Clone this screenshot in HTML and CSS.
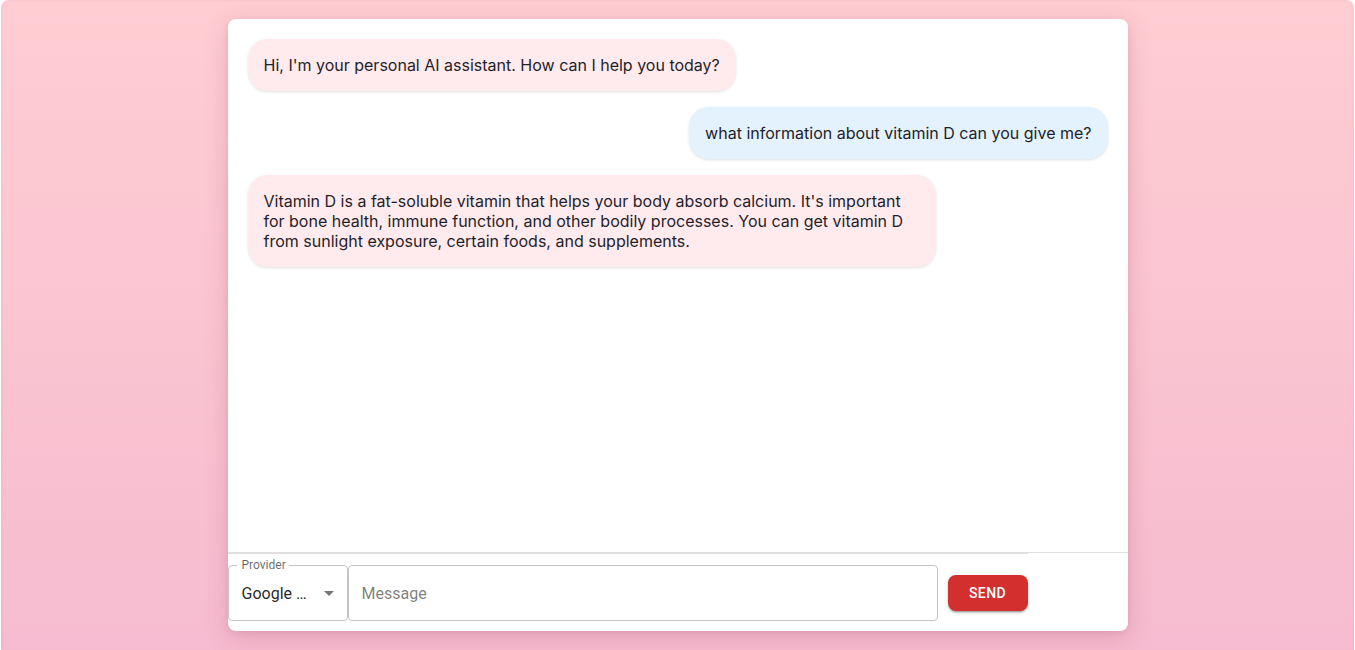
FILE: index.html
```html
<!DOCTYPE html>
<html lang="en">
<head>
<meta charset="utf-8">
<title>AI Assistant</title>
<link rel="stylesheet" href="styles.css">
</head>
<body>
<div class="page">
  <div class="card">
    <div class="messages">
      <div class="bubble ai">Hi, I'm your personal AI assistant. How can I help you today?</div>
      <div class="bubble user">what information about vitamin D can you give me?</div>
      <div class="bubble ai">Vitamin D is a fat-soluble vitamin that helps your body absorb calcium. It's important for bone health, immune function, and other bodily processes. You can get vitamin D from sunlight exposure, certain foods, and supplements.</div>
    </div>
    <div class="footer">
      <div class="row">
        <div class="select">
          <fieldset class="outline"><legend>Provider</legend></fieldset>
          <span class="label">Provider</span>
          <span class="value">Google Gemini</span>
          <svg class="arrow" viewBox="0 0 24 24" width="24" height="24"><path d="M7 10l5 5 5-5z" fill="rgba(0,0,0,0.54)"/></svg>
        </div>
        <div class="field">
          <span class="placeholder">Message</span>
        </div>
        <button class="send">SEND</button>
      </div>
    </div>
  </div>
</div>
</body>
</html>
```

FILE: styles.css
```css
* { box-sizing: border-box; }
html, body { margin: 0; padding: 0; }
body { font-family: Inter, "Noto Sans", sans-serif; overflow: hidden; }

.page {
  margin: 0 1px;
  height: 660px;
  border-radius: 8px;
  background: linear-gradient(#ffcdd2, #f6bbd0);
  box-shadow: inset 0 0 4px rgba(0,0,0,0.06);
  padding-top: 19px;
  display: flex;
  justify-content: center;
  align-items: flex-start;
}

.card {
  width: 900px;
  height: 612px;
  background: #fff;
  border-radius: 8px;
  box-shadow: 0 6px 24px rgba(160, 60, 90, 0.22), 0 2px 6px rgba(0,0,0,0.06);
  display: flex;
  flex-direction: column;
  overflow: hidden;
}

.messages {
  flex: 1;
  padding: 20px;
  display: flex;
  flex-direction: column;
  gap: 16px;
}

.bubble {
  max-width: 80%;
  padding: 16px;
  border-radius: 20px;
  font-size: 16px;
  line-height: 20px;
  color: #1f2329;
  box-shadow: 0 1px 3px rgba(0,0,0,0.12);
}
.bubble.ai { align-self: flex-start; background: #ffebee; }
.bubble.user { align-self: flex-end; background: #e3f2fd; }

.footer {
  border-top: 1px solid #e0e0e0;
  padding-bottom: 10px;
}
.row {
  width: 800px;
  border-top: 1px solid #e0e0e0;
  padding-top: 11px;
  display: flex;
  align-items: center;
  font-family: Roboto, sans-serif;
}

.select {
  position: relative;
  width: 120px;
  height: 56px;
  flex: none;
  display: flex;
  align-items: center;
  padding: 0 32px 0 14px;
}
.outline {
  position: absolute;
  inset: -5px 0 0 0;
  margin: 0;
  padding: 0 8px;
  border: 1px solid #c4c4c4;
  border-radius: 4px;
  pointer-events: none;
}
.outline legend {
  font-size: 12px;
  padding: 0 4px;
  visibility: hidden;
  height: 11px;
  line-height: 11px;
}
.label {
  position: absolute;
  left: 14px;
  top: -7px;
  font-size: 12px;
  line-height: 14px;
  color: rgba(0,0,0,0.6);
}
.value {
  font-size: 16px;
  color: rgba(0,0,0,0.87);
  white-space: nowrap;
  overflow: hidden;
  text-overflow: ellipsis;
  min-width: 0;
}
.arrow {
  position: absolute;
  right: 7px;
  top: 16px;
}

.field {
  flex: 1;
  height: 56px;
  border: 1px solid #c4c4c4;
  border-radius: 4px;
  display: flex;
  align-items: center;
  padding: 0 13px;
}
.placeholder {
  font-size: 16px;
  color: rgba(0,0,0,0.52);
}

.send {
  margin-left: 10px;
  width: 80px;
  height: 36px;
  flex: none;
  border: 0;
  border-radius: 8px;
  background: #d32f2f;
  color: #fff;
  font-family: Roboto, sans-serif;
  font-weight: 500;
  font-size: 14px;
  letter-spacing: 0.4px;
  box-shadow: 0 3px 1px -2px rgba(0,0,0,0.2), 0 2px 2px rgba(0,0,0,0.14), 0 1px 5px rgba(0,0,0,0.12);
}
```
